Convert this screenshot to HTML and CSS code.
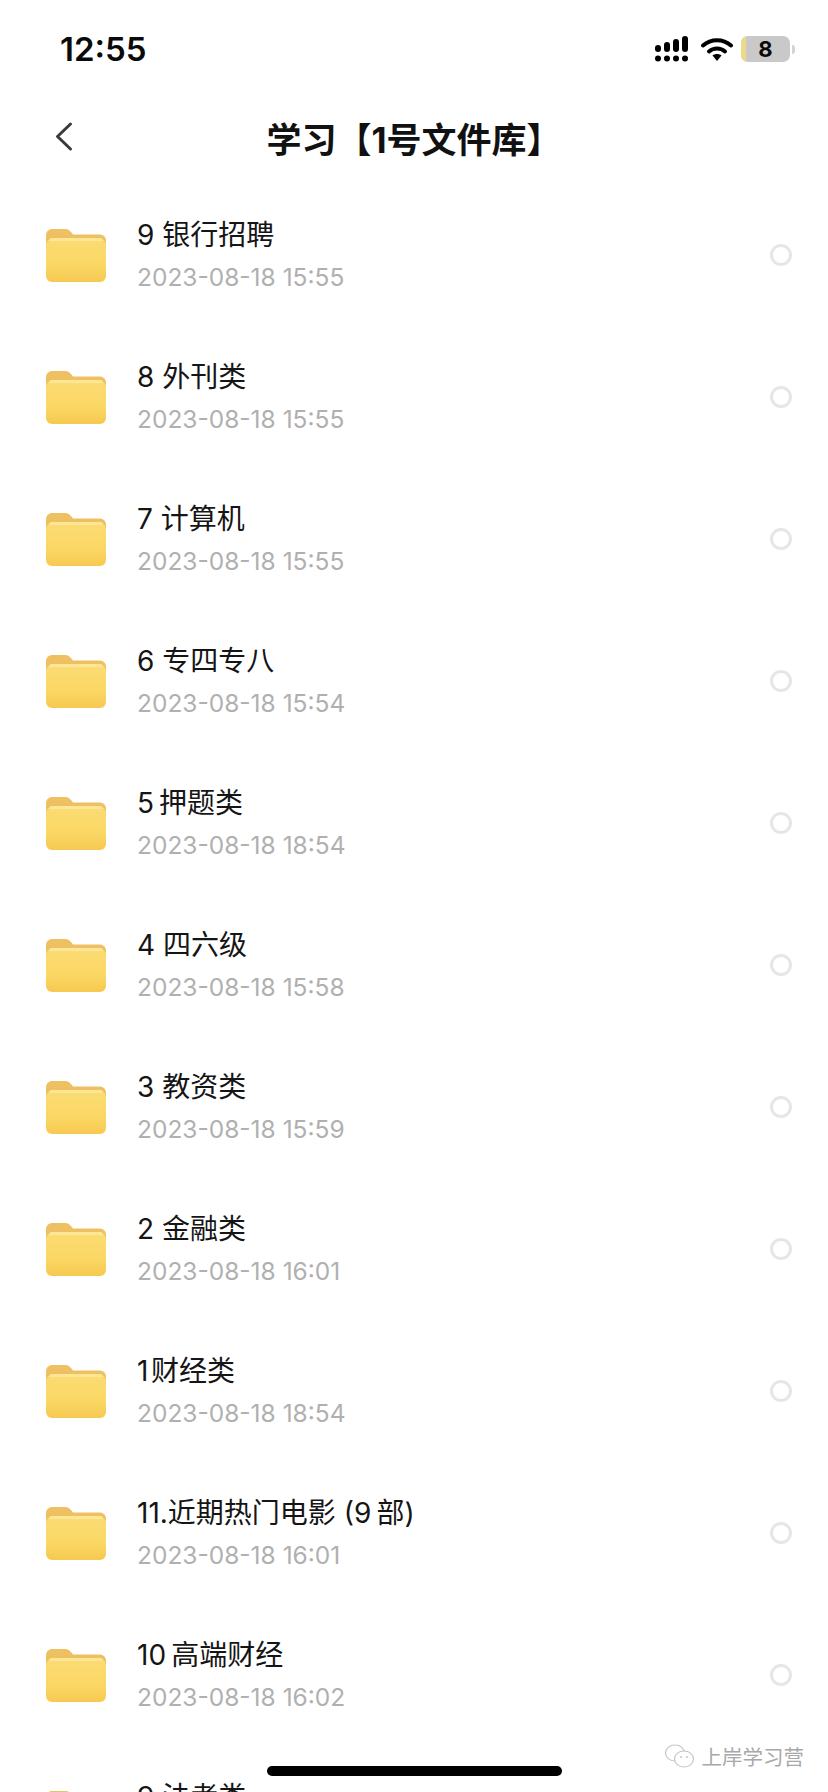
FILE: index.html
```html
<!DOCTYPE html>
<html lang="zh-CN">
<head>
  <meta charset="UTF-8">
  <title>学习【1号文件库】</title>
  <link rel="stylesheet" href="styles.css">
</head>
<body>
  <svg class="defs" width="0" height="0">
    <defs>
      <linearGradient id="folderFront" x1="0" y1="0" x2="0" y2="1">
        <stop offset="0" stop-color="#fbdc74"/>
        <stop offset="0.6" stop-color="#fbd764"/>
        <stop offset="1" stop-color="#f6c951"/>
      </linearGradient>
      <symbol id="folder" viewBox="0 0 60 54">
        <path d="M0 7a6 6 0 0 1 6-6h13c3 0 4 1 6 3l2 2.500h27a6 6 0 0 1 6 6V24H0z" fill="#eec062"/>
        <rect x="0" y="11" width="60" height="43" rx="6" fill="url(#folderFront)"/>
        <path d="M3 13a3 3 0 0 1 3-3h48a3 3 0 0 1 3 3z" fill="#fde797"/>
      </symbol>
    </defs>
  </svg>

  <div class="phone">
    <div class="status-bar">
      <span class="time">12:55</span>
      <div class="status-icons">
        <svg class="signal" width="34" height="26" viewBox="0 0 34 26">
          <rect x="0" y="9" width="6" height="7" rx="3"/>
          <rect x="9" y="6" width="6" height="10" rx="3"/>
          <rect x="18" y="3" width="6" height="13" rx="3"/>
          <rect x="27" y="0" width="6" height="16" rx="3"/>
          <circle cx="3" cy="22.500" r="3"/>
          <circle cx="12" cy="22.500" r="3"/>
          <circle cx="21" cy="22.500" r="3"/>
          <circle cx="30" cy="22.500" r="3"/>
        </svg>
        <svg class="wifi" width="32" height="25" viewBox="0 0 32 25">
          <path d="M2 8.500C10 1.500 22 1.500 30 8.500" fill="none" stroke="#000" stroke-width="4" stroke-linecap="round"/>
          <path d="M8 14.500C12.500 10.500 19.500 10.500 24 14.500" fill="none" stroke="#000" stroke-width="4" stroke-linecap="round"/>
          <path d="M11.500 18.500C14 16.500 18 16.500 20.500 18.500L16 24z"/>
        </svg>
        <div class="battery">
          <div class="battery-body">
            <span class="battery-level"></span>
            <span class="battery-num">8</span>
          </div>
          <span class="battery-cap"></span>
        </div>
      </div>
    </div>

    <header class="nav-bar">
      <svg class="back" width="20" height="32" viewBox="0 0 20 32">
        <path d="M16.500 4L3.500 16.500L16.500 29" fill="none" stroke="#3a3a3c" stroke-width="3" stroke-linecap="round" stroke-linejoin="round"/>
      </svg>
      <h1 class="nav-title">学习【1号文件库】</h1>
    </header>

    <ul class="file-list">
      <li class="file-row">
        <svg class="folder-icon"><use href="#folder"/></svg>
        <div class="file-info"><div class="file-name">9 银行招聘</div><div class="file-date">2023-08-18 15:55</div></div>
        <span class="radio"></span>
      </li>
      <li class="file-row">
        <svg class="folder-icon"><use href="#folder"/></svg>
        <div class="file-info"><div class="file-name">8 外刊类</div><div class="file-date">2023-08-18 15:55</div></div>
        <span class="radio"></span>
      </li>
      <li class="file-row">
        <svg class="folder-icon"><use href="#folder"/></svg>
        <div class="file-info"><div class="file-name">7 计算机</div><div class="file-date">2023-08-18 15:55</div></div>
        <span class="radio"></span>
      </li>
      <li class="file-row">
        <svg class="folder-icon"><use href="#folder"/></svg>
        <div class="file-info"><div class="file-name">6 专四专八</div><div class="file-date">2023-08-18 15:54</div></div>
        <span class="radio"></span>
      </li>
      <li class="file-row">
        <svg class="folder-icon"><use href="#folder"/></svg>
        <div class="file-info"><div class="file-name">5&#8201;押题类</div><div class="file-date">2023-08-18 18:54</div></div>
        <span class="radio"></span>
      </li>
      <li class="file-row">
        <svg class="folder-icon"><use href="#folder"/></svg>
        <div class="file-info"><div class="file-name">4 四六级</div><div class="file-date">2023-08-18 15:58</div></div>
        <span class="radio"></span>
      </li>
      <li class="file-row">
        <svg class="folder-icon"><use href="#folder"/></svg>
        <div class="file-info"><div class="file-name">3 教资类</div><div class="file-date">2023-08-18 15:59</div></div>
        <span class="radio"></span>
      </li>
      <li class="file-row">
        <svg class="folder-icon"><use href="#folder"/></svg>
        <div class="file-info"><div class="file-name">2 金融类</div><div class="file-date">2023-08-18 16:01</div></div>
        <span class="radio"></span>
      </li>
      <li class="file-row">
        <svg class="folder-icon"><use href="#folder"/></svg>
        <div class="file-info"><div class="file-name">1&#8202;财经类</div><div class="file-date">2023-08-18 18:54</div></div>
        <span class="radio"></span>
      </li>
      <li class="file-row">
        <svg class="folder-icon"><use href="#folder"/></svg>
        <div class="file-info"><div class="file-name">11.近期热门电影 (9&#8201;部)</div><div class="file-date">2023-08-18 16:01</div></div>
        <span class="radio"></span>
      </li>
      <li class="file-row">
        <svg class="folder-icon"><use href="#folder"/></svg>
        <div class="file-info"><div class="file-name">10&#8201;高端财经</div><div class="file-date">2023-08-18 16:02</div></div>
        <span class="radio"></span>
      </li>
      <li class="file-row">
        <svg class="folder-icon"><use href="#folder"/></svg>
        <div class="file-info"><div class="file-name">9 法考类</div><div class="file-date">2023-08-18 16:02</div></div>
        <span class="radio"></span>
      </li>
    </ul>

    <div class="watermark">
      <svg width="32" height="28" viewBox="0 0 32 28">
        <ellipse cx="11" cy="11" rx="9.500" ry="8" fill="#fff" stroke="#c4c4c4" stroke-width="1.200"/>
        <ellipse cx="20" cy="17" rx="9.500" ry="8" fill="#fff" stroke="#c4c4c4" stroke-width="1.200"/>
        <circle cx="17" cy="15" r="1" fill="#c4c4c4"/>
        <circle cx="23" cy="15" r="1" fill="#c4c4c4"/>
      </svg>
      <span>上岸学习营</span>
    </div>
    <div class="home-indicator"></div>
  </div>
</body>
</html>
```

FILE: styles.css
```css
html, body {
  margin: 0;
  padding: 0;
  background: #fff;
}
.defs { position: absolute; }
.phone {
  position: relative;
  width: 828px;
  height: 1792px;
  overflow: hidden;
  background: #fff;
  font-family: Inter, "Noto Sans CJK SC", sans-serif;
  color: #111;
}

/* status bar */
.status-bar {
  display: flex;
  justify-content: space-between;
  align-items: center;
  height: 98px;
  padding: 0 33px 0 60px;
  box-sizing: border-box;
}
.time {
  font-size: 33px;
  font-weight: 600;
  color: #0a0a0a;
}
.status-icons {
  display: flex;
  align-items: center;
  gap: 10px;
}
.signal { display: block; }
.wifi { display: block; margin-left: 2px; }
.battery {
  display: flex;
  align-items: center;
  gap: 2px;
  margin-left: -2px;
}
.battery-body {
  position: relative;
  width: 49px;
  height: 26px;
  border-radius: 7px;
  background: #c9c9c9;
  overflow: hidden;
  display: flex;
  align-items: center;
  justify-content: center;
}
.battery-level {
  position: absolute;
  left: 0;
  top: 0;
  bottom: 0;
  width: 5px;
  background: #ecd98a;
}
.battery-num {
  font-size: 22px;
  font-weight: 700;
  color: #0a0a0a;
}
.battery-cap {
  width: 3px;
  height: 9px;
  border-radius: 0 3px 3px 0;
  background: #d4d4d4;
}

/* nav */
.nav-bar {
  position: relative;
  display: flex;
  align-items: center;
  justify-content: center;
  height: 82px;
  padding-bottom: 4px;
  box-sizing: border-box;
}
.back {
  position: absolute;
  left: 54px;
  top: 22px;
}
.nav-title {
  margin: 0;
  font-size: 35px;
  font-weight: 700;
  color: #111;
}

/* list */
.file-list {
  list-style: none;
  margin: 0;
  padding: 4px 0 0;
}
.file-row {
  display: flex;
  align-items: center;
  height: 142px;
  padding: 0 36px 0 46px;
  box-sizing: border-box;
}
.folder-icon {
  width: 60px;
  height: 54px;
  flex: none;
  margin-right: 31px;
}
.file-info {
  flex: 1;
  display: flex;
  flex-direction: column;
  gap: 10px;
}
.file-name {
  font-size: 28px;
  line-height: 34px;
  color: #151515;
}
.file-date {
  font-size: 24.500px;
  line-height: 30px;
  color: #b0b0b0;
}
.radio {
  width: 16px;
  height: 16px;
  border: 3px solid #e6e6e6;
  border-radius: 50%;
  flex: none;
}

/* overlays */
.watermark {
  position: absolute;
  right: 24px;
  top: 1741px;
  display: flex;
  align-items: center;
  gap: 6px;
  font-size: 20.500px;
  color: #a8a8a8;
}
.home-indicator {
  position: absolute;
  left: 267px;
  top: 1766px;
  width: 295px;
  height: 10px;
  border-radius: 5px;
  background: #000;
}
```
